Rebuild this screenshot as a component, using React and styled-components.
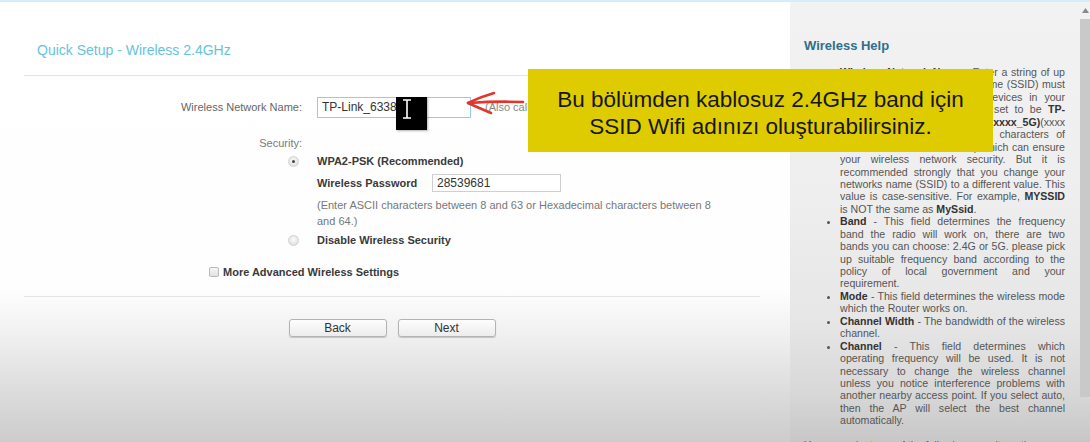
import React from 'react';
import styled, { createGlobalStyle } from 'styled-components';

const Global = createGlobalStyle`
  html, body { margin: 0; padding: 0; }
  body {
    width: 1090px;
    height: 442px;
    overflow: hidden;
    background: #fff;
    font-family: "Liberation Sans", Arial, sans-serif;
  }
  #root { height: 442px; }
`;

const Page = styled.div`
  position: relative;
  width: 1090px;
  height: 442px;
  overflow: hidden;
  display: flex;
  flex-direction: column;
`;

const TopLine = styled.div`
  height: 2px;
  flex: none;
  background: #d2eef9;
`;

const Body = styled.div`
  flex: 1;
  display: flex;
  min-height: 0;
`;

const Main = styled.main`
  width: 790px;
  flex: none;
  display: flex;
  flex-direction: column;
  background: linear-gradient(180deg, #ffffff 0px, #fefefe 288px, #efefef 336px, #dcdcdc 390px, #cccccc 440px);
`;

const Title = styled.h1`
  margin: 38px 0 0 37px;
  height: 20px;
  line-height: 20px;
  font-size: 14px;
  font-weight: normal;
  color: #66c3dc;
`;

const Rule = styled.hr`
  margin: ${p => p.$top}px 30px 0 24px;
  height: 0;
  border: 0;
  border-top: 1px solid #e4e4e4;
`;

const Row = styled.div`
  display: grid;
  grid-template-columns: 302px auto;
  column-gap: 15px;
  align-items: center;
  height: ${p => p.$h}px;
  margin-top: ${p => p.$mt}px;
`;

const Label = styled.span`
  justify-self: end;
  font-size: 11px;
  color: ${p => p.$tone || '#666'};
`;

const Field = styled.div`
  display: flex;
  align-items: center;
  min-width: 0;
`;

const TextBox = styled.input`
  box-sizing: border-box;
  width: ${p => p.$w}px;
  height: ${p => p.$h}px;
  margin: 0;
  padding: 0 4px;
  border: 1px solid ${p => p.$accent ? '#8fd0e2' : '#cfcfcf'};
  background: #fff;
  font: 12px "Liberation Sans", Arial, sans-serif;
  color: #333;
  outline: none;
`;

const Hint = styled.span`
  margin-left: 14px;
  font-size: 11px;
  color: #888;
  white-space: nowrap;
`;

const Strong = styled.span`
  font-size: 11px;
  font-weight: bold;
  color: #3a3a3a;
  white-space: nowrap;
`;

const PassLabel = styled(Strong)`
  width: 115px;
  flex: none;
`;

const Radio = styled.span`
  justify-self: end;
  margin-right: 3px;
  width: 11px;
  height: 11px;
  box-sizing: border-box;
  border-radius: 50%;
  border: 1px solid #d2d2d2;
  background: radial-gradient(circle at 50% 40%, #fbfbfb, #dadada);
  display: flex;
  align-items: center;
  justify-content: center;
  &::after {
    content: '';
    width: 3px;
    height: 3px;
    border-radius: 50%;
    background: ${p => (p.$checked ? '#444' : 'transparent')};
  }
`;

const Note = styled.div`
  margin: 5px 0 0 317px;
  font-size: 11px;
  line-height: 16px;
  color: #777;
  white-space: nowrap;
`;

const CheckRow = styled.div`
  display: flex;
  align-items: center;
  gap: 4px;
  height: 16px;
  margin-top: 16px;
  padding-left: 209px;
`;

const Check = styled.span`
  width: 10px;
  height: 10px;
  box-sizing: border-box;
  border: 1px solid #b9b9b9;
  border-radius: 2px;
  background: linear-gradient(#f6f6f6, #e2e2e2);
`;

const Buttons = styled.div`
  display: flex;
  justify-content: center;
  gap: 11px;
  margin: 22px 30px 0 24px;
`;

const Button = styled.button`
  width: 98px;
  height: 18px;
  box-sizing: border-box;
  padding: 0;
  border: 1px solid #b3b3b3;
  border-radius: 3px;
  background: linear-gradient(#fdfdfd, #ececec);
  box-shadow: 0 1px 1px rgba(0, 0, 0, 0.18);
  font: 12px "Liberation Sans", Arial, sans-serif;
  color: #333;
`;

const Help = styled.aside`
  flex: 1;
  display: flex;
  background: linear-gradient(180deg, #f2f2f2 0px, #eeeeee 200px, #e6e6e6 320px, #d8d8d8 390px, #c7c7c7 440px);
`;

const HelpBody = styled.div`
  flex: 1;
  display: flex;
  flex-direction: column;
  padding: 0 15px 0 14px;
  min-width: 0;
`;

const HelpTitle = styled.h2`
  margin: 36px 0 0;
  height: 16px;
  line-height: 16px;
  font-size: 13px;
  font-weight: bold;
  color: #2f6f8c;
`;

const HelpList = styled.ul`
  margin: 12px 0 0;
  padding-left: 36px;
  font-size: 10.6px;
  line-height: 12.43px;
  color: #555;
`;

const Item = styled.li`
  list-style: disc outside;
`;

const Line = styled.span`
  display: block;
  white-space: nowrap;
  text-align: justify;
  text-align-last: ${p => (p.$end ? 'left' : 'justify')};
`;

const B = styled.b`
  color: #333;
`;

const HelpFoot = styled.p`
  margin: 12px 0 0;
  font-size: 10.6px;
  line-height: 12.43px;
  color: #555;
  white-space: nowrap;
`;

const Scroll = styled.div`
  width: 10px;
  flex: none;
  display: flex;
  flex-direction: column;
  align-items: center;
`;

const Thumb = styled.div`
  margin-top: 6px;
  width: 10px;
  height: 378px;
  background: #c9c9c9;
`;

const Callout = styled.div`
  position: absolute;
  left: 528px;
  top: 69px;
  width: 465px;
  height: 83px;
  box-sizing: border-box;
  padding-top: 17px;
  background: #dfcc00;
  text-align: center;
  font-size: 22.5px;
  line-height: 27px;
  color: #161616;
  white-space: nowrap;
`;

const Cursor = styled.div`
  position: absolute;
  left: 396px;
  top: 97px;
  width: 31px;
  height: 33px;
  background: #000;
  box-shadow: 1px 1px 2px rgba(0, 0, 0, 0.3);
`;

const Arrow = styled.svg`
  position: absolute;
  left: 464px;
  top: 88px;
`;

export default function App() {
  return (
    <>
      <Global />
      <Page>
        <TopLine />
        <Body>
          <Main>
            <Title>Quick Setup - Wireless 2.4GHz</Title>
            <Rule $top={15} />
            <Row $h={22} $mt={20}>
              <Label>Wireless Network Name:</Label>
              <Field>
                <TextBox $w={154} $h={21} $accent readOnly defaultValue="TP-Link_6338" />
                <Hint>(Also called the SSID)</Hint>
              </Field>
            </Row>
            <Row $h={16} $mt={17}>
              <Label $tone="#7a7a7a">Security:</Label>
            </Row>
            <Row $h={16} $mt={2}>
              <Radio $checked />
              <Strong>WPA2-PSK (Recommended)</Strong>
            </Row>
            <Row $h={18} $mt={5}>
              <span />
              <Field>
                <PassLabel>Wireless Password</PassLabel>
                <TextBox $w={129} $h={18} readOnly defaultValue="28539681" />
              </Field>
            </Row>
            <Note>
              <div>(Enter ASCII characters between 8 and 63 or Hexadecimal characters between 8</div>
              <div>and 64.)</div>
            </Note>
            <Row $h={16} $mt={3}>
              <Radio />
              <Strong>Disable Wireless Security</Strong>
            </Row>
            <CheckRow>
              <Check />
              <Strong>More Advanced Wireless Settings</Strong>
            </CheckRow>
            <Rule $top={16} />
            <Buttons>
              <Button>Back</Button>
              <Button>Next</Button>
            </Buttons>
          </Main>
          <Help>
            <HelpBody>
              <HelpTitle>Wireless Help</HelpTitle>
              <HelpList>
                <Item>
                  <Line><B>Wireless Network Name</B> - Enter a string of up</Line>
                  <Line>to 32 characters. The same Name (SSID) must</Line>
                  <Line>be assigned to all wireless devices in your</Line>
                  <Line>network. The default SSID is set to be <B>TP-</B></Line>
                  <Line><B>LINK_XXXX</B> and <B>TP-LINK_xxxx_5G)</B>(xxxx</Line>
                  <Line>indicates the last unique four characters of</Line>
                  <Line>each Router's MAC address) which can ensure</Line>
                  <Line>your wireless network security. But it is</Line>
                  <Line>recommended strongly that you change your</Line>
                  <Line>networks name (SSID) to a different value. This</Line>
                  <Line>value is case-sensitive. For example, <B>MYSSID</B></Line>
                  <Line $end>is NOT the same as <B>MySsid</B>.</Line>
                </Item>
                <Item>
                  <Line><B>Band</B> - This field determines the frequency</Line>
                  <Line>band the radio will work on, there are two</Line>
                  <Line>bands you can choose: 2.4G or 5G. please pick</Line>
                  <Line>up suitable frequency band according to the</Line>
                  <Line>policy of local government and your</Line>
                  <Line $end>requirement.</Line>
                </Item>
                <Item>
                  <Line><B>Mode</B> - This field determines the wireless mode</Line>
                  <Line $end>which the Router works on.</Line>
                </Item>
                <Item>
                  <Line><B>Channel Width</B> - The bandwidth of the wireless</Line>
                  <Line $end>channel.</Line>
                </Item>
                <Item>
                  <Line><B>Channel</B> - This field determines which</Line>
                  <Line>operating frequency will be used. It is not</Line>
                  <Line>necessary to change the wireless channel</Line>
                  <Line>unless you notice interference problems with</Line>
                  <Line>another nearby access point. If you select auto,</Line>
                  <Line>then the AP will select the best channel</Line>
                  <Line $end>automatically.</Line>
                </Item>
              </HelpList>
              <HelpFoot>You can select one of the following security options:</HelpFoot>
            </HelpBody>
            <Scroll>
              <svg width="7" height="5" viewBox="0 0 7 5" style={{ marginTop: 6 }}>
                <path d="M0 5 L3.5 0 L7 5 Z" fill="#8a8a8a" />
              </svg>
              <Thumb />
            </Scroll>
          </Help>
        </Body>
        <Cursor>
          <svg width="31" height="33" viewBox="0 0 31 33">
            <path d="M7 3 H11 M15 3 H11 V21 M7 21 H15" stroke="#fff" strokeWidth="1.6" fill="none" />
          </svg>
        </Cursor>
        <Arrow width="64" height="30" viewBox="0 0 64 30">
          <g fill="none" stroke="#e3352b" strokeWidth="2.6" strokeLinecap="round" strokeLinejoin="round">
            <path d="M30 5 Q16 9 4 15" />
            <path d="M4 15 Q15 20 27 25" />
            <path d="M5 15 Q32 13 59 14" />
          </g>
        </Arrow>
        <Callout>
          Bu bölümden kablosuz 2.4GHz band için
          <br />
          SSID Wifi adınızı oluşturabilirsiniz.
        </Callout>
      </Page>
    </>
  );
}
